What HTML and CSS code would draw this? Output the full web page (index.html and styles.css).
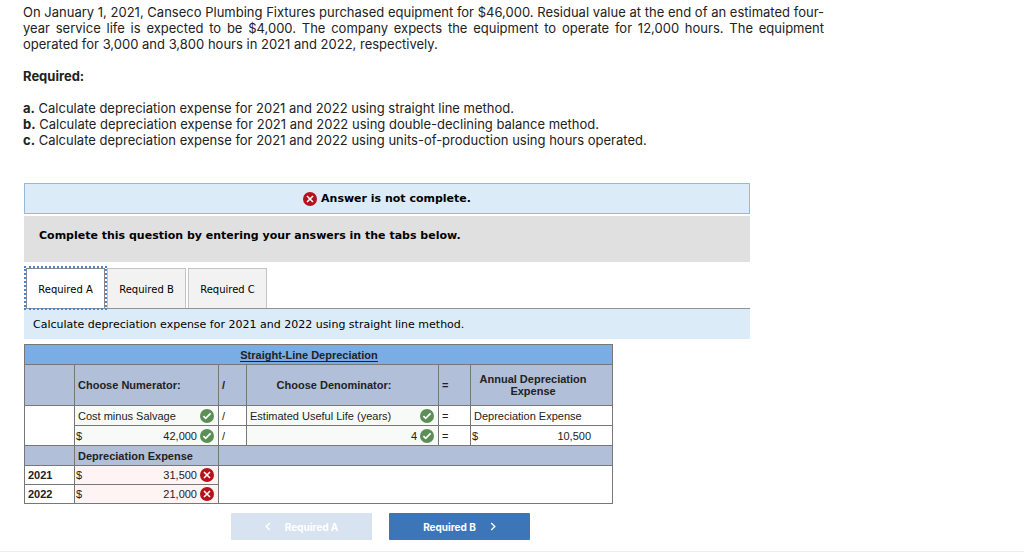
FILE: index.html
```html
<!DOCTYPE html>
<html lang="en">
<head>
<meta charset="utf-8">
<meta name="viewport" content="width=device-width, initial-scale=1">
<title>Depreciation</title>
<link rel="stylesheet" href="styles.css">
</head>
<body>
<svg class="defs" aria-hidden="true">
  <symbol id="ok" viewBox="0 0 14 14"><circle cx="7" cy="7" r="7" fill="#5b8f57"/><path d="M3.4 7.1l2.3 2.2 4.9-4.9" fill="none" stroke="#fff" stroke-width="1.7"/></symbol>
  <symbol id="bad" viewBox="0 0 14 14"><circle cx="7" cy="7" r="7" fill="#b5121b"/><path d="M4 4l6 6M10 4l-6 6" fill="none" stroke="#fff" stroke-width="1.6"/></symbol>
</svg>
<main class="page">
  <section class="problem">
    <p class="intro">On January 1, 2021, Canseco Plumbing Fixtures purchased equipment for $46,000. Residual value at the end of an estimated four-year service life is expected to be $4,000. The company expects the equipment to operate for 12,000 hours. The equipment operated for 3,000 and 3,800 hours in 2021 and 2022, respectively.</p>
    <p><b>Required:</b></p>
    <p><b>a.</b> Calculate depreciation expense for 2021 and 2022 using straight line method.<br>
    <b>b.</b> Calculate depreciation expense for 2021 and 2022 using double-declining balance method.<br>
    <b>c.</b> Calculate depreciation expense for 2021 and 2022 using units-of-production using hours operated.</p>
  </section>
  <section class="answer">
    <div class="status"><svg class="mark"><use href="#bad"/></svg>Answer is not complete.</div>
    <div class="instruction">Complete this question by entering your answers in the tabs below.</div>
    <div class="tabs" role="tablist">
      <button class="tab active" role="tab" aria-selected="true">Required A</button>
      <button class="tab" role="tab" aria-selected="false">Required B</button>
      <button class="tab" role="tab" aria-selected="false">Required C</button>
    </div>
    <div class="prompt">Calculate depreciation expense for 2021 and 2022 using straight line method.</div>
    <table class="sheet">
      <colgroup><col class="c-year"><col class="c-num"><col class="c-op"><col class="c-den"><col class="c-eq"><col class="c-res"></colgroup>
      <tbody>
      <tr class="title"><th colspan="6"><span>Straight-Line Depreciation</span></th></tr>
      <tr class="head tall"><th></th><th class="left">Choose Numerator:</th><th class="left">/</th><th>Choose Denominator:</th><th class="left">=</th><th>Annual Depreciation Expense</th></tr>
      <tr>
        <td rowspan="2"></td>
        <td class="good"><div class="field"><select aria-label="Numerator"><option>Cost minus Salvage</option></select><svg class="mark"><use href="#ok"/></svg></div></td>
        <td>/</td>
        <td class="good"><div class="field"><select aria-label="Denominator"><option>Estimated Useful Life (years)</option></select><svg class="mark"><use href="#ok"/></svg></div></td>
        <td>=</td><td>Depreciation Expense</td>
      </tr>
      <tr>
        <td class="good money"><div class="field"><span>$</span><input type="text" aria-label="Numerator amount" value="42,000"><svg class="mark"><use href="#ok"/></svg></div></td>
        <td>/</td>
        <td class="good"><div class="field"><input type="text" aria-label="Useful life in years" value="4"><svg class="mark"><use href="#ok"/></svg></div></td>
        <td>=</td><td class="money"><div class="field total"><span>$</span><span>10,500</span></div></td>
      </tr>
      <tr class="head"><th></th><th class="left">Depreciation Expense</th><th colspan="4"></th></tr>
      <tr class="year"><th class="left">2021</th><td class="wrong money"><div class="field"><span>$</span><input type="text" aria-label="2021 depreciation expense" value="31,500"><svg class="mark"><use href="#bad"/></svg></div></td><td colspan="4" rowspan="2"></td></tr>
      <tr class="year"><th class="left">2022</th><td class="wrong money"><div class="field"><span>$</span><input type="text" aria-label="2022 depreciation expense" value="21,000"><svg class="mark"><use href="#bad"/></svg></div></td></tr>
      </tbody>
    </table>
    <div class="nav">
      <button class="step" disabled><svg class="arrow" viewBox="0 0 6 10"><path d="M5 1L1 5l4 4"/></svg>Required A</button>
      <button class="step">Required B<svg class="arrow" viewBox="0 0 6 10"><path d="M1 1l4 4-4 4"/></svg></button>
    </div>
  </section>
</main>
</body>
</html>
```
FILE: styles.css
```css
* { box-sizing: border-box; }
body { margin: 0; background: #fff; color: #000; font-family: "DejaVu Sans", sans-serif; font-size: 11px; }
button, input, select { font: inherit; color: inherit; margin: 0; }
.defs { position: absolute; width: 0; height: 0; }
.page { padding: 4px 24px 11px 23px; border-bottom: 1px solid #eee; }
.problem { max-width: 801px; font-family: Inter, sans-serif; font-size: 13px; line-height: 16px; color: #222; }
.problem p { margin: 0 0 16px; }
.intro { text-align: justify; }
.answer { max-width: 727px; margin-top: 35px; padding-left: 1px; }
.mark { flex: none; width: 14px; height: 14px; }
.status { display: flex; align-items: center; justify-content: center; gap: 4px; height: 31px; border: 1px solid #94b8de; background: #dbecf8; font-weight: bold; }
.instruction { height: 46px; margin-top: 2px; padding: 12px 15px; background: #e0e0e0; font-weight: bold; line-height: 16px; }
.tabs { display: flex; gap: 2px; margin-top: 6px; padding: 0 2px; border-bottom: 1px solid #8e9399; }
.tab { width: 79px; height: 40px; padding: 2px 0 0; border: 1px solid #c4c4c4; border-bottom: 0; background: #f2f2f2; font-size: 10px; }
.tab.active { border-color: #888; background: #fff; outline: 2px dotted #4f83c4; }
.prompt { padding: 9px 9px 7px; line-height: 14px; background: #dbecf8; }
.sheet { table-layout: fixed; width: 589px; margin-top: 5px; border-collapse: collapse; font-family: "Liberation Sans", Arial, sans-serif; font-size: 11px; line-height: 12px; color: #222; }
.c-year { width: 50px; }
.c-num { width: 144px; }
.c-op { width: 28px; }
.c-den { width: 192px; }
.c-eq { width: 32px; }
.c-res { width: 142px; }
.sheet th, .sheet td { height: 20px; padding: 0 3px; border: 1px solid #777; }
.sheet .title th { padding-right: 22px; background: #7aade3; }
.title span { border-bottom: 1px solid #222; }
.sheet .head th { background: #b2bfd8; }
.sheet .tall th { height: 41px; padding-right: 20px; }
.sheet .tall .left { padding-right: 0; }
.sheet .year th, .sheet .year td { height: 19px; }
.sheet .left { text-align: left; }
.sheet .good { background: #f7faf7; }
.sheet .wrong { background: #fff4f4; }
.sheet .money { padding-left: 1px; }
.field { display: flex; align-items: center; gap: 3px; padding-right: 1px; }
.field input, .field select { flex: 1; min-width: 0; width: 100%; height: 14px; padding: 0; border: 0; background: transparent; appearance: none; }
.field input { text-align: right; }
.total { justify-content: space-between; padding-right: 18px; }
.nav { display: flex; gap: 17px; margin: 9px 0 0 207px; }
.step { display: flex; align-items: center; justify-content: center; gap: 14px; width: 141px; height: 27px; padding: 0; border: 0; border-radius: 1px; background: #3c76b8; color: #fff; font-family: Inter, sans-serif; font-size: 10px; font-weight: bold; }
.step:disabled { background: #d8e3f1; color: #fff; }
.arrow { width: 6px; height: 9px; fill: none; stroke: currentColor; stroke-width: 1.5; }
```
